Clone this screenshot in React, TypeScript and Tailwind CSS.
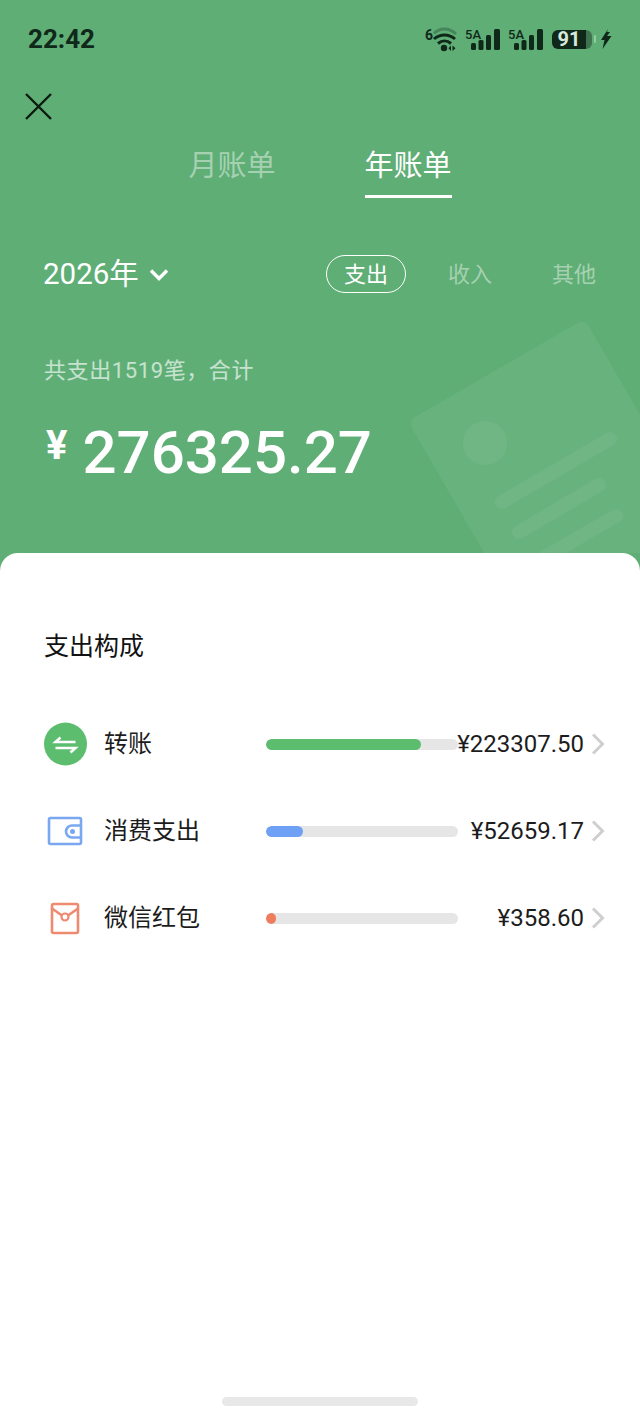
import React from 'react';

const rows = [
  { name: '转账', amount: '¥223307.50', fill: 'w-[155px] bg-[#5dbd6f]', icon: 'transfer' },
  { name: '消费支出', amount: '¥52659.17', fill: 'w-[37px] bg-[#6ea1f5]', icon: 'wallet' },
  { name: '微信红包', amount: '¥358.60', fill: 'w-[10px] bg-[#ee7d5e]', icon: 'packet' },
];

const Signal = () => (
  <svg width="36" height="26" viewBox="0 0 36 26" className="text-[#10281a]">
    <text x="0" y="13" fontSize="13" fontWeight="500" fill="currentColor" fontFamily="Roboto, sans-serif">5A</text>
    <rect x="6" y="17" width="5" height="7" rx="1.5" fill="currentColor" />
    <rect x="13.500" y="14" width="5" height="10" rx="1.5" fill="currentColor" />
    <rect x="21" y="9" width="5" height="15" rx="1.5" fill="currentColor" />
    <rect x="29" y="3" width="6" height="21" rx="1.5" fill="currentColor" />
  </svg>
);

const Wifi = () => (
  <svg width="32" height="26" viewBox="0 0 32 26" className="text-[#10281a]">
    <text x="0" y="14" fontSize="14" fontWeight="700" fill="currentColor" fontFamily="Roboto, sans-serif">6</text>
    <path d="M9 7.500C15 1.500 24 1.500 31 8" fill="none" stroke="currentColor" strokeOpacity="0.3" strokeWidth="3" />
    <path d="M9 13C15 7.500 24 7.500 30 13" fill="none" stroke="currentColor" strokeWidth="3" />
    <path d="M13 17.500C17 14 22 14 26 17.500" fill="none" stroke="currentColor" strokeWidth="3" />
    <circle cx="19" cy="22" r="3.200" fill="currentColor" />
    <path d="M26 19.500v5.500l-2.500-2.700zM27.500 25v-5.500l3 2.700z" fill="currentColor" />
  </svg>
);

const RowIcon = ({ type }: { type: string }) => {
  if (type === 'transfer') {
    return (
      <svg width="44" height="44" viewBox="0 0 44 44">
        <circle cx="21.500" cy="22" r="21.500" fill="#5dbd6f" />
        <path d="M16.500 15.500L11.500 20H31.500M26.500 30.500L31.500 26H11.500" fill="none" stroke="#fff" strokeWidth="2.500" />
      </svg>
    );
  }
  if (type === 'wallet') {
    return (
      <svg width="44" height="44" viewBox="0 0 44 44">
        <rect x="5" y="9" width="32" height="26" rx="1.500" fill="none" stroke="#7aa8f0" strokeWidth="2.600" />
        <path d="M37 16.500H28a6 6 0 0 0 0 12h9" fill="none" stroke="#7aa8f0" strokeWidth="2.600" />
        <circle cx="28.500" cy="22.500" r="2.500" fill="#7aa8f0" />
      </svg>
    );
  }
  return (
    <svg width="44" height="44" viewBox="0 0 44 44">
      <rect x="8" y="8" width="26" height="29" rx="1.500" fill="none" stroke="#ee8a70" strokeWidth="2.600" />
      <path d="M8 12.500L18 19.500M34 12.500L24 19.500" fill="none" stroke="#ee8a70" strokeWidth="2.600" />
      <circle cx="21" cy="21" r="3.500" fill="none" stroke="#ee8a70" strokeWidth="2.200" />
    </svg>
  );
};

export default function App() {
  return (
    <div className="flex h-[1416px] w-[640px] flex-col overflow-hidden bg-[#5fae76] font-['Roboto','Noto_Sans_CJK_SC',sans-serif]">
      <div className="relative flex h-[553px] shrink-0 flex-col overflow-hidden">
        {/* faded bill drawing behind the total */}
        <svg width="640" height="553" viewBox="0 0 640 553" className="absolute left-0 top-0">
          <g fill="#fff" fillOpacity="0.06">
            <rect x="0" y="0" width="204" height="300" rx="8" transform="translate(408 421) rotate(-30)" />
            <circle cx="485" cy="443" r="22" />
          </g>
          <g stroke="#fff" strokeOpacity="0.06" strokeWidth="14" strokeLinecap="round">
            <path d="M502 502L610 439" />
            <path d="M519 532L599 485" />
            <path d="M540 560L616 516" />
          </g>
        </svg>

        <div className="relative flex h-[78px] items-center justify-between pl-[28px] pr-[28px]">
          <span className="text-[26px] font-bold text-[#10281a]">22:42</span>
          <div className="flex items-center">
            <Wifi />
            <div className="ml-[8px]"><Signal /></div>
            <div className="ml-[7px]"><Signal /></div>
            <div className="ml-[8px] flex h-[19px] w-[40px] items-center justify-center rounded-[6px] bg-[linear-gradient(to_right,#10281a_86%,#3f7350_86%)] pr-[6px]">
              <span className="text-[20px] font-bold leading-none text-[#d8e6dc]">91</span>
            </div>
            <div className="ml-[2px] h-[8px] w-[2px] rounded-full bg-[#8fcda0]" />
            <svg width="12" height="22" viewBox="0 0 12 22" className="ml-[4px]">
              <path d="M8 1L1 12h3.500l-2 9 9-13H7l3-4H7z" fill="#10281a" />
            </svg>
          </div>
        </div>

        <div className="relative ml-[24px] mt-[14px] h-[30px] w-[30px]">
          <svg width="30" height="30" viewBox="0 0 30 30">
            <path d="M2 2l25 25M27 2L2 27" stroke="#0c1a10" strokeWidth="2.400" fill="none" />
          </svg>
        </div>

        <div className="relative mt-[22px] flex justify-center gap-[89px] text-[29px] leading-[44px]">
          <div className="pb-[7px] text-white/45">月账单</div>
          <div className="border-b-[3px] border-white pb-[7px] text-white">年账单</div>
        </div>

        <div className="relative mt-[56px] flex h-[40px] items-center pl-[43px]">
          <span className="text-[29.500px] text-white">2026年</span>
          <svg width="22" height="16" viewBox="0 0 22 16" className="ml-[9px] mt-[2px]">
            <path d="M3 3.500l8 8 8-8" fill="none" stroke="#fff" strokeWidth="3.400" />
          </svg>
          <div className="ml-auto flex items-center pr-[44px] text-[22px]">
            <div className="flex h-[38px] w-[80px] items-center justify-center rounded-full border-[1.5px] border-white text-white">支出</div>
            <div className="ml-[42px] text-white/45">收入</div>
            <div className="ml-[60px] text-white/45">其他</div>
          </div>
        </div>

        <div className="relative mt-[59px] pl-[44px] text-[22px] leading-[36px] tracking-[0.6px] text-white/65">共支出1519笔，合计</div>

        <div className="relative mt-[27px] flex items-start pl-[46px] text-white">
          <span className="mt-[10px] text-[40px] font-bold leading-[40px]">¥</span>
          <span className="ml-[15px] text-[60px] font-medium leading-[74px]">276325.27</span>
        </div>
      </div>

      <div className="relative flex flex-1 flex-col rounded-t-[18px] bg-white">
        <div className="pl-[44px] pt-[75px] text-[25px] leading-[38px] text-[#111]">支出构成</div>

        <div className="mt-[56px] flex flex-col gap-[43px] pr-[34px]">
          {rows.map((row) => (
            <div key={row.name} className="flex h-[44px] items-center pl-[44px]">
              <div className="w-[60px] shrink-0"><RowIcon type={row.icon} /></div>
              <div className="w-[162px] shrink-0 text-[24px] text-[#1c1c1c]">{row.name}</div>
              <div className="h-[11px] w-[192px] shrink-0 overflow-hidden rounded-full bg-[#e6e6e6]">
                <div className={`h-full rounded-full ${row.fill}`} />
              </div>
              <div className="flex min-w-0 flex-1 justify-end whitespace-nowrap text-[24px] text-[#1c1c1c]">
                {row.amount}
              </div>
              <svg width="16" height="24" viewBox="0 0 16 24" className="ml-[6px] shrink-0">
                <path d="M3 2.500l9.500 9.500L3 21.500" fill="none" stroke="#cfcfcf" strokeWidth="3" />
              </svg>
            </div>
          ))}
        </div>

        <div className="mt-auto mb-[10px] h-[9px] w-[196px] self-center rounded-full bg-[#e8e8e8]" />
      </div>
    </div>
  );
}
